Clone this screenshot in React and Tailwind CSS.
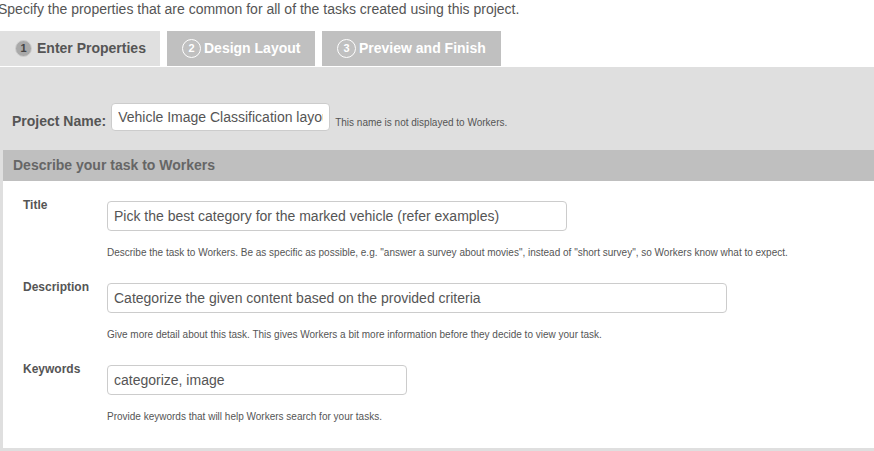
export default function App() {

  const fields = [
    {
      label: "Title",
      value: "Pick the best category for the marked vehicle (refer examples)",
      width: "w-[460px]",
      hint: "Describe the task to Workers. Be as specific as possible, e.g. \"answer a survey about movies\", instead of \"short survey\", so Workers know what to expect."
    },
    {
      label: "Description",
      value: "Categorize the given content based on the provided criteria",
      width: "w-[620px]",
      hint: "Give more detail about this task. This gives Workers a bit more information before they decide to view your task."
    },
    {
      label: "Keywords",
      value: "categorize, image",
      width: "w-[300px]",
      hint: "Provide keywords that will help Workers search for your tasks."
    }
  ];

  return (
    <main className="w-[874px] h-[451px] overflow-hidden bg-white font-['Liberation_Sans',Arial,sans-serif] text-[#555]">

      {/* INTRO */}
      <p className="-ml-[2px] text-[14px] leading-[18px] whitespace-nowrap">
        Specify the properties that are common for all of the tasks created using this project.
      </p>

      {/* TABS */}
      <div className="mt-[13px] flex gap-[7px] h-[35px]">
        <div className="w-[160px] bg-[#e0e0e0] flex items-center pl-[15px] gap-[5px]">
          <span className="w-[17px] h-[17px] rounded-full bg-[#a9a9a9] border border-[#cfcfcf] flex items-center justify-center text-[11px] font-bold text-[#444]">1</span>
          <span className="text-[14px] font-bold text-[#555]">Enter Properties</span>
        </div>
        <div className="w-[148px] bg-[#c0c0c0] flex items-center pl-[15px] gap-[3px] text-white">
          <span className="w-[19px] h-[19px] rounded-full border border-white flex items-center justify-center text-[11px] font-bold">2</span>
          <span className="text-[14px] font-bold">Design Layout</span>
        </div>
        <div className="w-[179px] bg-[#c0c0c0] flex items-center pl-[15px] gap-[3px] text-white">
          <span className="w-[19px] h-[19px] rounded-full border border-white flex items-center justify-center text-[11px] font-bold">3</span>
          <span className="text-[14px] font-bold">Preview and Finish</span>
        </div>
      </div>

      {/* PANEL */}
      <div className="mt-[1px] bg-[#dfdfdf] pl-[3px] pb-[4px]">

        <div className="flex items-end pt-[36px] pb-[19px] -ml-[3px]">
          <span className="ml-[12px] -mb-[1px] text-[14px] font-bold text-[#555]">Project Name:</span>
          <input
            readOnly
            value="Vehicle Image Classification layout"
            className="ml-[5px] w-[219px] h-[28px] bg-white border border-[#ccc] rounded-[4px] px-[6px] text-[14px] text-[#555] outline-none"
          />
          <span className="ml-[5px] mb-[1px] text-[10px] text-[#555]">This name is not displayed to Workers.</span>
        </div>

        <div className="h-[31px] bg-[#bfbfbf] flex items-center px-[10px] text-[14px] font-bold text-[#666]">
          Describe your task to Workers
        </div>

        <div className="bg-white pl-[20px] pt-[20px] pb-[24px] flex flex-col gap-[23px]">
          {fields.map((f) => (
            <div key={f.label} className="flex">
              <div className="w-[84px] text-[12px] font-bold text-[#555] leading-[14px] -mt-[3px]">
                {f.label}
              </div>
              <div className="flex flex-col">
                <input
                  readOnly
                  value={f.value}
                  className={`${f.width} h-[30px] bg-white border border-[#ccc] rounded-[4px] px-[6px] text-[14px] text-[#555] outline-none`}
                />
                <p className="mt-[15px] text-[10px] leading-[14px] text-[#555] whitespace-nowrap">
                  {f.hint}
                </p>
              </div>
            </div>
          ))}
        </div>

      </div>

    </main>
  );
}
